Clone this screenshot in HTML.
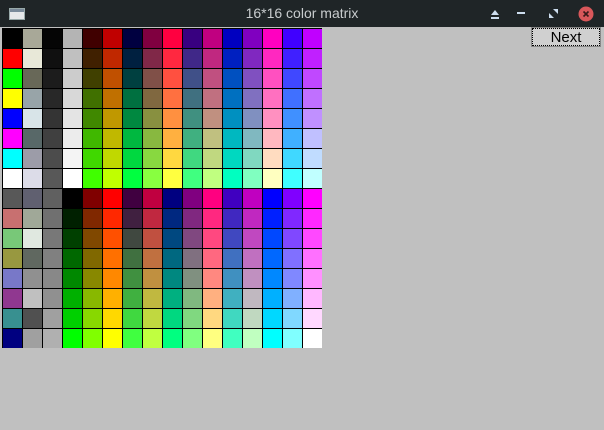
<!DOCTYPE html>
<html><head><style>
body{margin:0;width:604px;height:430px;background:#c0c0c0;position:relative;overflow:hidden;font-family:"Liberation Sans",sans-serif}
#tb{position:absolute;left:0;top:0;width:604px;height:27px;background:#1f2527;color:#c8ccce;font-size:14px;text-align:center;line-height:27px}
#g{position:absolute;left:2px;top:28px;width:320px;height:320px;background:#000;display:grid;grid-template-columns:repeat(16,19px);grid-auto-rows:19px;gap:1px;padding:1px 0 0 1px;box-sizing:border-box}
#nx{position:absolute;left:532px;top:28px;width:68px;height:18px;background:#d0d0d0;border:1px dotted #000;outline:1px solid #888;box-sizing:border-box;font-size:15px;text-align:center;line-height:17px;color:#000}
</style></head><body>
<div id="tb">16*16 color matrix
<svg style="position:absolute;left:9px;top:8px" width="16" height="12"><rect x="0.5" y="0.5" width="15" height="11" fill="#e6e8ea" stroke="#9aa"/><rect x="1" y="1" width="14" height="3" fill="#7a8a9a"/></svg>
<svg style="position:absolute;left:490px;top:9px" width="10" height="10"><path d="M1 6 L5 1 L9 6Z M1 8h8v2H1z" fill="#cde"/></svg>
<svg style="position:absolute;left:517px;top:12px" width="8" height="3"><rect width="8" height="2" fill="#cde"/></svg>
<svg style="position:absolute;left:549px;top:9px" width="9" height="9"><path d="M0 9V4l5 5z M9 0v5L4 0z" fill="#cde"/></svg>
<svg style="position:absolute;left:578px;top:6px" width="16" height="16"><circle cx="8" cy="8" r="7.5" fill="#d9575a"/><path d="M5.5 5.5l5 5M10.5 5.5l-5 5" stroke="#3a1a1a" stroke-width="1.6"/></svg>
</div>
<div id="g">
<div style="background:#000000"></div><div style="background:#a8a898"></div><div style="background:#050505"></div><div style="background:#b4b4b4"></div><div style="background:#400000"></div><div style="background:#c00000"></div><div style="background:#000040"></div><div style="background:#800040"></div><div style="background:#ff0040"></div><div style="background:#380080"></div><div style="background:#c00080"></div><div style="background:#0000c0"></div><div style="background:#8000c0"></div><div style="background:#ff00c0"></div><div style="background:#4000ff"></div><div style="background:#c000ff"></div>
<div style="background:#ff0000"></div><div style="background:#e8e8d8"></div><div style="background:#101010"></div><div style="background:#c0c0c0"></div><div style="background:#402000"></div><div style="background:#c02800"></div><div style="background:#002040"></div><div style="background:#802848"></div><div style="background:#ff2840"></div><div style="background:#402888"></div><div style="background:#c02880"></div><div style="background:#0020c0"></div><div style="background:#8028c0"></div><div style="background:#ff28c0"></div><div style="background:#4020ff"></div><div style="background:#c020ff"></div>
<div style="background:#00ff00"></div><div style="background:#686858"></div><div style="background:#1c1c1c"></div><div style="background:#cccccc"></div><div style="background:#404000"></div><div style="background:#c05000"></div><div style="background:#004040"></div><div style="background:#805048"></div><div style="background:#ff5040"></div><div style="background:#405088"></div><div style="background:#c05080"></div><div style="background:#0050c0"></div><div style="background:#8050c0"></div><div style="background:#ff50c0"></div><div style="background:#4048ff"></div><div style="background:#c048ff"></div>
<div style="background:#ffff00"></div><div style="background:#98a4a8"></div><div style="background:#282828"></div><div style="background:#d8d8d8"></div><div style="background:#407000"></div><div style="background:#c07000"></div><div style="background:#007040"></div><div style="background:#806840"></div><div style="background:#ff7040"></div><div style="background:#407080"></div><div style="background:#c07080"></div><div style="background:#0070c0"></div><div style="background:#8070c0"></div><div style="background:#ff70c0"></div><div style="background:#4070ff"></div><div style="background:#c070ff"></div>
<div style="background:#0000ff"></div><div style="background:#d8e4e8"></div><div style="background:#343434"></div><div style="background:#e4e4e4"></div><div style="background:#408800"></div><div style="background:#c09800"></div><div style="background:#008840"></div><div style="background:#889040"></div><div style="background:#ff9040"></div><div style="background:#409080"></div><div style="background:#c09080"></div><div style="background:#0090c0"></div><div style="background:#8090c0"></div><div style="background:#ff90c0"></div><div style="background:#4090ff"></div><div style="background:#c090ff"></div>
<div style="background:#ff00ff"></div><div style="background:#586868"></div><div style="background:#404040"></div><div style="background:#ececec"></div><div style="background:#40b800"></div><div style="background:#c0b800"></div><div style="background:#00b840"></div><div style="background:#88b840"></div><div style="background:#ffb040"></div><div style="background:#40b080"></div><div style="background:#c0c080"></div><div style="background:#00b8c0"></div><div style="background:#80b8c0"></div><div style="background:#ffb8c0"></div><div style="background:#40b0ff"></div><div style="background:#c0c0ff"></div>
<div style="background:#00ffff"></div><div style="background:#9c9ca8"></div><div style="background:#4c4c4c"></div><div style="background:#f4f4f4"></div><div style="background:#40d800"></div><div style="background:#c0d800"></div><div style="background:#00d840"></div><div style="background:#88d840"></div><div style="background:#ffd840"></div><div style="background:#40d880"></div><div style="background:#c0d880"></div><div style="background:#00d8c0"></div><div style="background:#80d8c0"></div><div style="background:#ffdcc0"></div><div style="background:#40d8ff"></div><div style="background:#c0dcff"></div>
<div style="background:#ffffff"></div><div style="background:#dcdce8"></div><div style="background:#585858"></div><div style="background:#ffffff"></div><div style="background:#40ff00"></div><div style="background:#c0ff00"></div><div style="background:#00ff40"></div><div style="background:#88ff40"></div><div style="background:#ffff40"></div><div style="background:#40ff80"></div><div style="background:#c0ff80"></div><div style="background:#00ffc0"></div><div style="background:#80ffc0"></div><div style="background:#ffffc0"></div><div style="background:#40ffff"></div><div style="background:#c0ffff"></div>
<div style="background:#585858"></div><div style="background:#606070"></div><div style="background:#606060"></div><div style="background:#000000"></div><div style="background:#800000"></div><div style="background:#ff0000"></div><div style="background:#400040"></div><div style="background:#c00040"></div><div style="background:#000080"></div><div style="background:#800080"></div><div style="background:#ff0080"></div><div style="background:#4000c0"></div><div style="background:#c000c0"></div><div style="background:#0000ff"></div><div style="background:#8000ff"></div><div style="background:#ff00ff"></div>
<div style="background:#c87070"></div><div style="background:#a0a898"></div><div style="background:#707070"></div><div style="background:#002000"></div><div style="background:#802800"></div><div style="background:#ff2800"></div><div style="background:#402040"></div><div style="background:#c02840"></div><div style="background:#002880"></div><div style="background:#802880"></div><div style="background:#ff2880"></div><div style="background:#4028c0"></div><div style="background:#c028c0"></div><div style="background:#0020ff"></div><div style="background:#8028ff"></div><div style="background:#ff28ff"></div>
<div style="background:#78c878"></div><div style="background:#e0e8e0"></div><div style="background:#787878"></div><div style="background:#004000"></div><div style="background:#804800"></div><div style="background:#ff5000"></div><div style="background:#404840"></div><div style="background:#c05040"></div><div style="background:#004880"></div><div style="background:#804880"></div><div style="background:#ff4880"></div><div style="background:#4048c0"></div><div style="background:#c048c0"></div><div style="background:#0048ff"></div><div style="background:#8048ff"></div><div style="background:#ff48ff"></div>
<div style="background:#989840"></div><div style="background:#606860"></div><div style="background:#808080"></div><div style="background:#006800"></div><div style="background:#806800"></div><div style="background:#ff7000"></div><div style="background:#407040"></div><div style="background:#c07040"></div><div style="background:#006880"></div><div style="background:#807080"></div><div style="background:#ff6880"></div><div style="background:#4070c0"></div><div style="background:#c070c0"></div><div style="background:#0068ff"></div><div style="background:#8070ff"></div><div style="background:#ff70ff"></div>
<div style="background:#7878c8"></div><div style="background:#909090"></div><div style="background:#888888"></div><div style="background:#008800"></div><div style="background:#888800"></div><div style="background:#ff8800"></div><div style="background:#409040"></div><div style="background:#c09040"></div><div style="background:#008880"></div><div style="background:#809080"></div><div style="background:#ff8880"></div><div style="background:#4090c0"></div><div style="background:#c090c0"></div><div style="background:#0088ff"></div><div style="background:#8088ff"></div><div style="background:#ff90ff"></div>
<div style="background:#903890"></div><div style="background:#c0c0c0"></div><div style="background:#909090"></div><div style="background:#00b000"></div><div style="background:#88b800"></div><div style="background:#ffb000"></div><div style="background:#40b040"></div><div style="background:#c0b840"></div><div style="background:#00b080"></div><div style="background:#80b880"></div><div style="background:#ffb080"></div><div style="background:#40b0c0"></div><div style="background:#c0b8c0"></div><div style="background:#00b0ff"></div><div style="background:#80b0ff"></div><div style="background:#ffb8ff"></div>
<div style="background:#389090"></div><div style="background:#505050"></div><div style="background:#a0a0a0"></div><div style="background:#00d000"></div><div style="background:#88d800"></div><div style="background:#ffd800"></div><div style="background:#40d840"></div><div style="background:#c0d840"></div><div style="background:#00d880"></div><div style="background:#80d880"></div><div style="background:#ffd880"></div><div style="background:#40d8c0"></div><div style="background:#c0d8c0"></div><div style="background:#00d8ff"></div><div style="background:#80d8ff"></div><div style="background:#ffd8ff"></div>
<div style="background:#000080"></div><div style="background:#a0a0a0"></div><div style="background:#b0b0b0"></div><div style="background:#00ff00"></div><div style="background:#80ff00"></div><div style="background:#ffff00"></div><div style="background:#40ff40"></div><div style="background:#c0ff40"></div><div style="background:#00ff80"></div><div style="background:#80ff80"></div><div style="background:#ffff80"></div><div style="background:#40ffc0"></div><div style="background:#c0ffc0"></div><div style="background:#00ffff"></div><div style="background:#80ffff"></div><div style="background:#ffffff"></div>
</div>
<div id="nx">Next</div>
</body></html>
